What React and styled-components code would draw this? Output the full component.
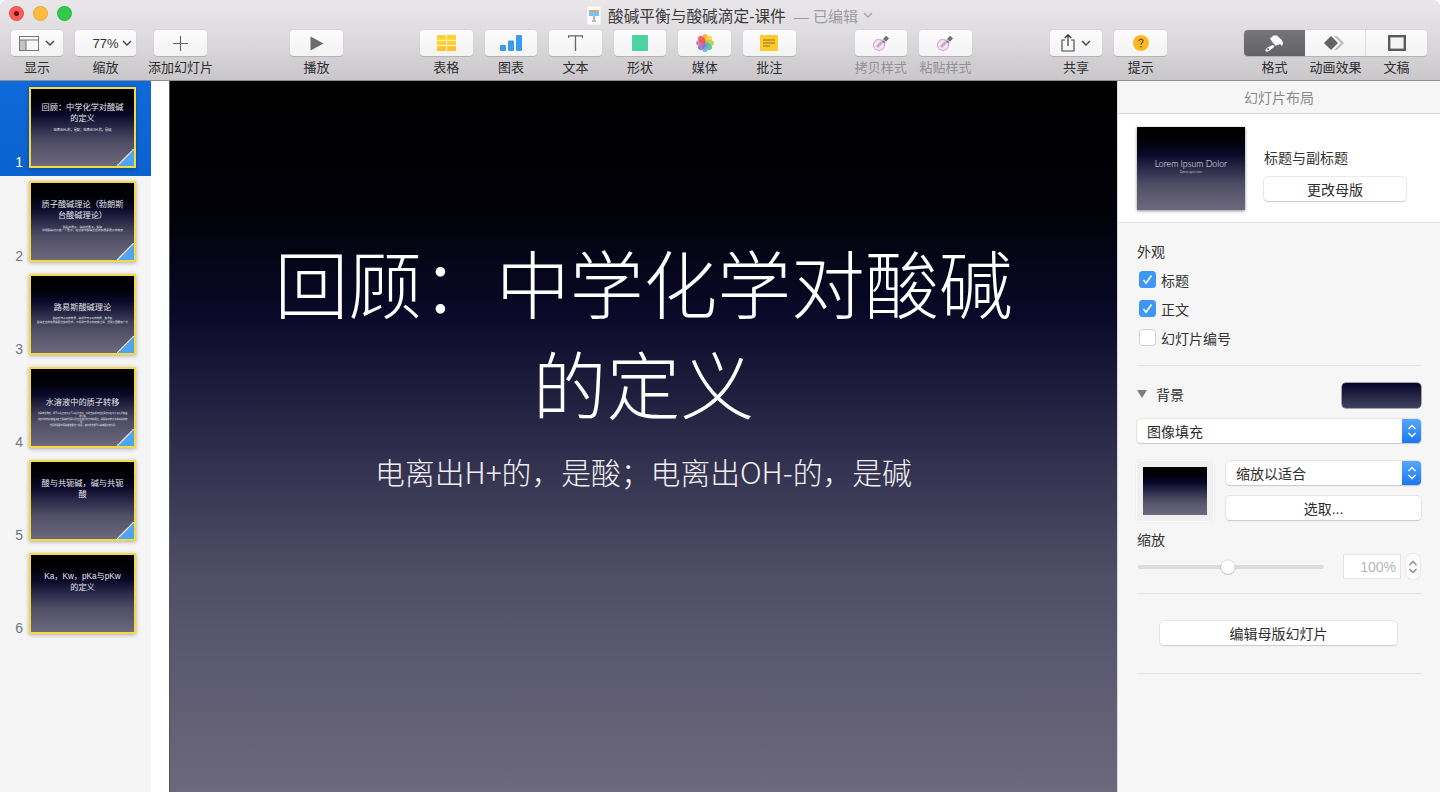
import React from "react";
import styled, { createGlobalStyle, css } from "styled-components";

const FONT = `"Liberation Sans", "Noto Sans CJK SC", sans-serif`;
const SLIDE_FONT = `"Noto Sans CJK SC", sans-serif`;
const SLIDE_BG = `linear-gradient(180deg, #000 0%, #010108 18%, #0a0929 33%, #2b2a49 50%, #514f67 70%, #6c697d 100%)`;

const GlobalStyle = createGlobalStyle`
  html, body { margin: 0; padding: 0; background: #fff; }
  body { font-family: ${FONT}; color: #333; }
  * { box-sizing: border-box; }
`;

const Window = styled.div`
  width: 1440px;
  height: 792px;
  overflow: hidden;
  border-radius: 6px 6px 0 0;
  display: flex;
  flex-direction: column;
`;

const Toolbar = styled.header`
  height: 81px;
  flex: none;
  background: linear-gradient(180deg, #e9e7ea 0%, #dddbde 45%, #c9c7ca 100%);
  border-bottom: 1px solid #8f8e90;
  display: flex;
  flex-direction: column;
`;

const TitleRow = styled.div`
  height: 30px;
  flex: none;
  position: relative;
  display: flex;
  align-items: center;
  padding-left: 587px;
`;

const Lights = styled.div`
  position: absolute;
  left: 9px;
  top: 6px;
  display: flex;
  gap: 9px;
`;

const Light = styled.span`
  width: 15px;
  height: 15px;
  border-radius: 50%;
  background: ${(p) => p.$color};
  border: 1px solid rgba(0, 0, 0, 0.08);
  display: flex;
  align-items: center;
  justify-content: center;
  &::after {
    content: "";
    display: ${(p) => (p.$dot ? "block" : "none")};
    width: 5px;
    height: 5px;
    border-radius: 50%;
    background: #6a0d0b;
  }
`;

const DocName = styled.span`
  margin-left: 7px;
  font-size: 15.7px;
  color: #3a3a3a;
  white-space: nowrap;
`;

const DocState = styled.span`
  margin-left: 8px;
  font-size: 15px;
  color: #9b9a9c;
  white-space: nowrap;
`;

const DocChevron = styled.span`
  margin-left: 5px;
  display: flex;
`;

const Tools = styled.div`
  display: flex;
  padding-left: 11px;
`;

const Group = styled.div`
  display: flex;
  gap: 12px;
  margin-left: ${(p) => p.$left || 0}px;
`;

const Tool = styled.div`
  width: ${(p) => p.$w || 52.6}px;
  margin-left: ${(p) => p.$left || 0}px;
  display: flex;
  flex-direction: column;
  align-items: center;
`;

const ToolButton = styled.div`
  width: 100%;
  height: 26px;
  border-radius: 4px;
  background: linear-gradient(180deg, #fcfcfc, #f3f3f3);
  box-shadow: 0 1px 0 #b3b2b4, 0 0 0 0.5px #d0cfd1;
  display: flex;
  align-items: center;
  justify-content: center;
  gap: 6px;
`;

const ZoomValue = styled.span`
  font-size: 13px;
  margin-left: 13px;
  margin-right: -3px;
  color: #333;
`;

const ToolLabel = styled.span`
  margin-top: 2.5px;
  font-size: 13px;
  line-height: 18px;
  white-space: nowrap;
  color: ${(p) => (p.$off ? "#929193" : "#2e2e2e")};
`;

const Segments = styled.div`
  width: 183px;
  display: flex;
  flex-direction: column;
`;

const SegmentBar = styled.div`
  height: 26px;
  display: flex;
  border-radius: 4px;
  overflow: hidden;
  background: linear-gradient(180deg, #fcfcfc, #f3f3f3);
  box-shadow: 0 1px 0 #b3b2b4, 0 0 0 0.5px #d0cfd1;
`;

const Segment = styled.div`
  flex: 1;
  display: flex;
  align-items: center;
  justify-content: center;
  border-left: ${(p) => (p.$divided ? "1px solid #dcdcdc" : "none")};
  ${(p) =>
    p.$active &&
    css`
      background: linear-gradient(180deg, #757476, #636264);
    `}
`;

const SegmentLabels = styled.div`
  display: flex;
  margin-top: 2.5px;
`;

const SegmentLabel = styled.span`
  flex: 1;
  text-align: center;
  font-size: 13px;
  line-height: 18px;
  white-space: nowrap;
  color: #2e2e2e;
`;

const Body = styled.div`
  flex: 1;
  min-height: 0;
  display: flex;
`;

const Sidebar = styled.aside`
  width: 151px;
  flex: none;
  background: #f5f5f5;
`;

const SlideRow = styled.div`
  height: ${(p) => (p.$selected ? 95 : 93)}px;
  padding-top: ${(p) => (p.$selected ? 6 : 5)}px;
  background: ${(p) => (p.$selected ? "linear-gradient(180deg, #0e6ad8, #0a62cf)" : "transparent")};
  display: flex;
  align-items: flex-start;
`;

const SlideNumber = styled.span`
  width: 23px;
  height: 83px;
  display: flex;
  align-items: flex-end;
  justify-content: flex-end;
  margin-right: 6px;
  font-size: 14px;
  line-height: 16px;
  color: ${(p) => (p.$selected ? "#fff" : "#6f7782")};
`;

const Thumb = styled.div`
  position: relative;
  width: 107px;
  height: 81px;
  border: 2px solid #f6d942;
  background: ${SLIDE_BG};
  box-shadow: 0 1px 4px rgba(0, 0, 0, 0.3);
  text-align: center;
  overflow: hidden;
  color: #e4e4e8;
  font-weight: 400;
  padding-top: ${(p) => p.$top}px;
`;

const ThumbTitle = styled.div`
  font-size: 8.2px;
  line-height: 11.4px;
  padding: 0 8px;
  white-space: pre-line;
`;

const ThumbSub = styled.div`
  font-size: ${(p) => p.$size || 3.2}px;
  line-height: ${(p) => (p.$size ? p.$size + 0.6 : 3.8)}px;
  margin-top: 4px;
  padding: 0 6px;
  white-space: pre-line;
`;

const BuildCorner = styled.svg`
  position: absolute;
  right: 0;
  bottom: 0;
`;

const Gutter = styled.div`
  width: 18px;
  flex: none;
  background: #fff;
`;

const Canvas = styled.main`
  width: 948px;
  flex: none;
  background: ${SLIDE_BG};
  color: #fff;
  text-align: center;
  padding-top: 149px;
  border-left: 1px solid #555;
  font-family: ${SLIDE_FONT};
`;

const SlideTitle = styled.h1`
  margin: 0 auto;
  width: 760px;
  font-size: 73.8px;
  line-height: 101px;
  font-weight: 300;
`;

const SlideSubtitle = styled.p`
  margin: 20px 0 0;
  font-size: 29.8px;
  line-height: 38px;
  font-weight: 300;
  color: #f0f0f4;
`;

const Inspector = styled.aside`
  flex: 1;
  background: #f6f6f6;
  border-left: 1px solid #d8d8d8;
  font-size: 14px;
  color: #333;
`;

const InspectorHead = styled.div`
  height: 33px;
  display: flex;
  align-items: center;
  justify-content: center;
  font-size: 14px;
  color: #8a8a8a;
  border-bottom: 1px solid #d4d6d9;
`;

const LayoutCard = styled.section`
  height: 109px;
  background: #fff;
  border-bottom: 1px solid #e2e2e2;
  padding: 13px 0 0 19px;
  display: flex;
  gap: 19px;
`;

const MasterPreview = styled.div`
  width: 108px;
  height: 83px;
  flex: none;
  background: ${SLIDE_BG};
  box-shadow: 0 1px 3px rgba(0, 0, 0, 0.45);
  color: #f0f0f2;
  text-align: center;
  padding-top: 31px;
  font-family: Lato, sans-serif;
  font-weight: 300;
  font-size: 8.8px;
  line-height: 12px;
`;

const MasterSub = styled.div`
  font-size: 3px;
  line-height: 5px;
`;

const MasterInfo = styled.div`
  padding-top: 21px;
  width: 142px;
`;

const MasterName = styled.div`
  font-size: 14px;
  line-height: 20px;
  white-space: nowrap;
`;

const PlainButton = styled.div`
  height: 24px;
  width: ${(p) => p.$w || "100%"};
  margin: ${(p) => p.$margin || 0};
  background: #fff;
  border-radius: 4px;
  box-shadow: 0 0 0 0.5px #d5d5d5, 0 1px 1px #c4c4c4;
  display: flex;
  align-items: center;
  justify-content: center;
  font-size: 14px;
  color: #2c2c2c;
`;

const Section = styled.section`
  margin: 0 19px 0 19px;
  padding: ${(p) => p.$pad};
  height: ${(p) => p.$h}px;
  border-bottom: 1px solid #e3e3e3;
`;

const SectionLabel = styled.div`
  font-size: 14px;
  line-height: 20px;
  margin-top: ${(p) => p.$top || 0}px;
  margin-bottom: ${(p) => p.$bottom || 0}px;
`;

const CheckRow = styled.div`
  height: 29px;
  padding-left: 2px;
  display: flex;
  align-items: center;
  gap: 5px;
  font-size: 14px;
`;

const CheckBox = styled.span`
  width: 17px;
  height: 17px;
  border-radius: 3.5px;
  background: ${(p) => (p.$on ? "#3f97f5" : "#fff")};
  border: ${(p) => (p.$on ? "none" : "1px solid #cfcfcf")};
  display: flex;
  align-items: center;
  justify-content: center;
`;

const BgHead = styled.div`
  display: flex;
  align-items: center;
  height: 25px;
`;

const BgLabel = styled.span`
  padding-bottom: 3px;
`;

const Triangle = styled.span`
  width: 0;
  height: 0;
  border-left: 5px solid transparent;
  border-right: 5px solid transparent;
  border-top: 8px solid #7d7d7d;
  margin: 0 9px 3px 0;
`;

const Swatch = styled.div`
  margin-left: auto;
  width: 79px;
  height: 25px;
  border-radius: 4px;
  background: linear-gradient(180deg, #06052a, #42415d);
  box-shadow: 0 0 0 0.5px #555;
`;

const Select = styled.div`
  height: 24px;
  margin-top: ${(p) => p.$top || 0}px;
  background: #fff;
  border-radius: 4px;
  box-shadow: 0 0 0 0.5px #d0d0d0, 0 1px 1px #c4c4c4;
  display: flex;
  align-items: center;
  padding-left: 10px;
  font-size: 14px;
  color: #2c2c2c;
  overflow: hidden;
`;

const SelectArrows = styled.span`
  margin-left: auto;
  width: 19px;
  height: 100%;
  background: linear-gradient(180deg, #58a6fb, #1a79f0);
  display: flex;
  align-items: center;
  justify-content: center;
`;

const ImageRow = styled.div`
  display: flex;
  gap: 12px;
  margin-top: 18px;
`;

const ImageWell = styled.div`
  width: 78px;
  height: 62px;
  flex: none;
  margin: -1px 0 0 -1px;
  background: #f0f0f0;
  border: 1px solid #fbfbfb;
  border-radius: 4px;
  box-shadow: 0 0 0 0.5px #eaeaea;
  padding: 6px;
`;

const WellImage = styled.div`
  width: 100%;
  height: 100%;
  background: ${SLIDE_BG};
`;

const ImageControls = styled.div`
  flex: 1;
  display: flex;
  flex-direction: column;
  gap: 11px;
`;

const ScaleRow = styled.div`
  display: flex;
  align-items: center;
  margin-top: 4px;
`;

const SliderTrack = styled.div`
  position: relative;
  width: 186px;
  height: 4px;
  margin-left: 1px;
  border-radius: 2px;
  background: #dcdcdc;
`;

const SliderThumb = styled.span`
  position: absolute;
  left: 83px;
  top: -5px;
  width: 14px;
  height: 14px;
  border-radius: 50%;
  background: #fff;
  box-shadow: 0 0 1px rgba(0, 0, 0, 0.45), 0 1px 1px rgba(0, 0, 0, 0.15);
`;

const ScaleInput = styled.div`
  width: 58px;
  height: 25px;
  margin-left: 19px;
  background: #fff;
  border: 1px solid #e3e3e3;
  display: flex;
  align-items: center;
  justify-content: flex-end;
  padding-right: 4px;
  font-size: 14px;
  color: #b5b5b5;
`;

const Stepper = styled.div`
  width: 14px;
  height: 25px;
  margin-left: 5px;
  background: #fbfbfb;
  border-radius: 5px;
  box-shadow: 0 0 0 0.5px #dcdcdc;
  display: flex;
  align-items: center;
  justify-content: center;
`;

const Chevron = ({ c = "#444", w = 10 }) => (
  <svg width={w} height="6" viewBox="0 0 10 6" fill="none">
    <path d="M1 1l4 4 4-4" stroke={c} strokeWidth="1.4" />
  </svg>
);

const UpDown = ({ c = "#fff" }) => (
  <svg width="10" height="16" viewBox="0 0 10 16" fill="none">
    <path d="M1.500 6L5 2.500 8.500 6M1.500 10L5 13.500 8.500 10" stroke={c} strokeWidth="1.400" />
  </svg>
);

const Tick = () => (
  <svg width="11" height="11" viewBox="0 0 11 11" fill="none">
    <path d="M1.500 6l2.500 3.200L9.500 1.500" stroke="#fff" strokeWidth="1.600" />
  </svg>
);

const DocIcon = () => (
  <svg width="14" height="19" viewBox="0 0 14 19">
    <rect width="14" height="19" fill="#fafafa" stroke="#d5d5d5" strokeWidth="0.5" />
    <rect x="2" y="4" width="10" height="6" fill="#7cc4ee" />
    <rect x="2" y="4" width="10" height="1.500" fill="#e8a15b" />
    <path d="M7 10v4M5 15h4" stroke="#777" strokeWidth="1" />
  </svg>
);

const ViewIcon = () => (
  <svg width="20" height="15" viewBox="0 0 20 15" fill="none">
    <rect x="0.500" y="0.500" width="19" height="14" fill="#f7f7f7" stroke="#777" />
    <rect x="1" y="4" width="6" height="10" fill="#c4c4c4" />
    <path d="M7 4v10M1 4h18" stroke="#777" />
  </svg>
);

const PlusIcon = () => (
  <svg width="15" height="15" viewBox="0 0 15 15">
    <path d="M7.500 0v15M0 7.500h15" stroke="#666" strokeWidth="1.200" />
  </svg>
);

const PlayIcon = () => (
  <svg width="14" height="15" viewBox="0 0 14 15">
    <path d="M0.500 0.500L13.500 7.500 0.500 14.500z" fill="#6b6b6b" />
  </svg>
);

const TableIcon = () => (
  <svg width="19" height="16" viewBox="0 0 19 16">
    <rect width="19" height="16" rx="1" fill="#fed12f" />
    <rect y="10" width="19" height="6" fill="#fcc232" />
    <path d="M9.500 0v16M0 5.300h19M0 10.600h19" stroke="#fff6cf" strokeWidth="1" />
  </svg>
);

const ChartIcon = () => (
  <svg width="22" height="16" viewBox="0 0 22 16">
    <rect x="0" y="10" width="6" height="6" rx="1" fill="#3a9bf0" />
    <rect x="8" y="5.500" width="6" height="10.500" rx="1" fill="#3a9bf0" />
    <rect x="16" y="0" width="6" height="16" rx="1" fill="#3a9bf0" />
  </svg>
);

const TextIcon = () => (
  <svg width="15" height="16" viewBox="0 0 15 16" fill="none">
    <path d="M0.500 3V0.800h14V3M7.500 0.800V16" stroke="#666" strokeWidth="1.300" />
  </svg>
);

const ShapeIcon = () => (
  <svg width="16" height="16" viewBox="0 0 16 16">
    <rect width="16" height="16" rx="1" fill="#4dd3a1" />
  </svg>
);

const PETALS = ["#f5a623", "#f7d13a", "#a5d24a", "#52c18b", "#5aa9e6", "#8a6fd1", "#d56bb5", "#ef5350"];
const PhotosIcon = () => (
  <svg width="18" height="18" viewBox="0 0 18 18">
    {PETALS.map((c, i) => (
      <ellipse key={c} cx="9" cy="4.500" rx="2.900" ry="4.500" fill={c} opacity="0.88" transform={`rotate(${i * 45} 9 9)`} />
    ))}
  </svg>
);

const NoteIcon = () => (
  <svg width="18" height="16" viewBox="0 0 18 16">
    <rect width="18" height="16" rx="1" fill="#fdcb2e" />
    <path d="M3 5h12M3 8h12M3 11h7" stroke="#8d6f16" strokeWidth="1" />
  </svg>
);

const DropperIcon = () => (
  <svg width="20" height="18" viewBox="0 0 20 18" fill="none">
    <circle cx="8" cy="11" r="5.500" fill="#f7e6f7" stroke="#eba4ea" strokeWidth="1.300" />
    <path d="M6 13l6.500-6.500" stroke="#b9b9bb" strokeWidth="3" />
    <path d="M12 7l2 2" stroke="#777" strokeWidth="1.500" />
    <path d="M13.500 6.500l3-3.500" stroke="#6f6f6f" strokeWidth="4" />
  </svg>
);

const ShareIcon = () => (
  <svg width="14" height="18" viewBox="0 0 14 18" fill="none">
    <path d="M4 6H1v11h12V6h-3" stroke="#444" strokeWidth="1.100" />
    <path d="M7 12V1M3.800 4L7 0.800 10.200 4" stroke="#222" strokeWidth="1.100" />
  </svg>
);

const TipIcon = () => (
  <svg width="16" height="16" viewBox="0 0 16 16">
    <circle cx="8" cy="8" r="8" fill="#fbb823" />
    <path d="M6 6.200c0-2.600 4-2.600 4-0.200 0 1.600-2 1.600-2 3.500" fill="none" stroke="#5a4208" strokeWidth="1.200" />
    <circle cx="8" cy="11.800" r="0.800" fill="#5a4208" />
  </svg>
);

const BrushIcon = () => (
  <svg width="18" height="17" viewBox="0 0 18 17">
    <path d="M5 3.500L8.500 0.500l3.500 0 2 2 3 2.500 1 3.500-1 2.500-2-2-1.500 1-1-0.500-1.500 1.500-3-3z" fill="#fff" />
    <path d="M7.800 9.800l1.800 1.800-4.800 3.800c-1.200 1-3.200 1.500-4.200 0.800-0.500-1 0.500-2.400 1.500-3.400z" fill="#fff" />
    <circle cx="3" cy="14" r="1" fill="#6a696b" />
  </svg>
);

const AnimIcon = () => (
  <svg width="21" height="14" viewBox="0 0 21 14">
    <path d="M13 0l7 7-7 7h-3l7-7-7-7z" fill="#bcbcbc" />
    <path d="M7 0l7 7-7 7-7-7z" fill="#636363" />
  </svg>
);

const DocumentIcon = () => (
  <svg width="18" height="16" viewBox="0 0 18 16" fill="none">
    <rect x="1.200" y="1.200" width="15.600" height="13.600" fill="#f5f5f5" stroke="#5a5a5a" strokeWidth="2.400" />
  </svg>
);

const Corner = () => (
  <BuildCorner width="17" height="17" viewBox="0 0 17 17">
    <path d="M17 1v16H1z" fill="#4da6f5" />
    <path d="M0 17L17 0" stroke="#fff" strokeWidth="1.200" />
  </BuildCorner>
);

const slides = [
  { title: "回顾：中学化学对酸碱的定义", top: 13, sub: "电离出H+的，是酸；电离出OH-的，是碱", build: true },
  { title: "质子酸碱理论（勃朗斯台酸碱理论）", top: 16, sub: "酸给出质子，碱接受质子，酸碱\n共轭酸碱对只差一个质子，在溶液中酸碱反应的实质是质子的转移", size: 2.8, build: true },
  { title: "路易斯酸碱理论", top: 26, sub: "酸接受电子对的物质，碱提供电子对的物质，路易斯\n酸碱反应的本质是配位键的形成，不局限于质子的转移过程，适用范围更加广泛", size: 2.6, build: true },
  { title: "水溶液中的质子转移", top: 28, sub: "水是两性物质，既可以给出质子又可以接受质子，水的自身解离反应是质子在水分子之间转移的过程\n溶液中的质子转移决定了酸碱的强弱以及反应进行的方向和限度，是酸碱平衡计算的基础和依据，\n常见的弱酸与弱碱都遵循这个规律，其平衡常数可以由实验测定得到", size: 2.2, build: true },
  { title: "酸与共轭碱，碱与共轭酸", top: 16, build: true },
  { title: "Ka，Kw，pKa与pKw\n的定义", top: 16 },
];

const tools1 = [
  { label: "显示", w: 52, extra: true, icon: <ViewIcon /> },
  { label: "缩放", w: 61, zoom: true },
  { label: "添加幻灯片", w: 53, icon: <PlusIcon />, left: 6 },
];
const tools2 = [
  { label: "表格", icon: <TableIcon /> },
  { label: "图表", icon: <ChartIcon /> },
  { label: "文本", icon: <TextIcon /> },
  { label: "形状", icon: <ShapeIcon /> },
  { label: "媒体", icon: <PhotosIcon /> },
  { label: "批注", icon: <NoteIcon /> },
];

const App = () => {
  return (
    <Window>
      <GlobalStyle />
      <Toolbar>
        <TitleRow>
          <Lights>
            <Light $color="#fc5b57" $dot />
            <Light $color="#fdbc40" />
            <Light $color="#34c84a" />
          </Lights>
          <DocIcon />
          <DocName>酸碱平衡与酸碱滴定-课件</DocName>
          <DocState>— 已编辑</DocState>
          <DocChevron>
            <Chevron c="#a5a4a6" />
          </DocChevron>
        </TitleRow>
        <Tools>
          <Group>
            {tools1.map((t) => (
              <Tool key={t.label} $w={t.w} $left={t.left}>
                <ToolButton>
                  {t.zoom ? (
                    <>
                      <ZoomValue>77%</ZoomValue>
                      <Chevron />
                    </>
                  ) : (
                    t.icon
                  )}
                  {t.extra && <Chevron />}
                </ToolButton>
                <ToolLabel>{t.label}</ToolLabel>
              </Tool>
            ))}
          </Group>
          <Group $left={83}>
            <Tool $w={53}>
              <ToolButton>
                <PlayIcon />
              </ToolButton>
              <ToolLabel>播放</ToolLabel>
            </Tool>
          </Group>
          <Group $left={77}>
            {tools2.map((t) => (
              <Tool key={t.label}>
                <ToolButton>{t.icon}</ToolButton>
                <ToolLabel>{t.label}</ToolLabel>
              </Tool>
            ))}
          </Group>
          <Group $left={59}>
            <Tool>
              <ToolButton>
                <DropperIcon />
              </ToolButton>
              <ToolLabel $off>拷贝样式</ToolLabel>
            </Tool>
            <Tool>
              <ToolButton>
                <DropperIcon />
              </ToolButton>
              <ToolLabel $off>粘贴样式</ToolLabel>
            </Tool>
          </Group>
          <Group $left={78}>
            <Tool>
              <ToolButton>
                <ShareIcon />
                <Chevron />
              </ToolButton>
              <ToolLabel>共享</ToolLabel>
            </Tool>
            <Tool>
              <ToolButton>
                <TipIcon />
              </ToolButton>
              <ToolLabel>提示</ToolLabel>
            </Tool>
          </Group>
          <Group $left={77}>
            <Segments>
              <SegmentBar>
                <Segment $active>
                  <BrushIcon />
                </Segment>
                <Segment>
                  <AnimIcon />
                </Segment>
                <Segment $divided>
                  <DocumentIcon />
                </Segment>
              </SegmentBar>
              <SegmentLabels>
                <SegmentLabel>格式</SegmentLabel>
                <SegmentLabel>动画效果</SegmentLabel>
                <SegmentLabel>文稿</SegmentLabel>
              </SegmentLabels>
            </Segments>
          </Group>
        </Tools>
      </Toolbar>
      <Body>
        <Sidebar>
          {slides.map((s, i) => (
            <SlideRow key={s.title} $selected={i === 0}>
              <SlideNumber $selected={i === 0}>{i + 1}</SlideNumber>
              <Thumb $top={s.top}>
                <ThumbTitle>{s.title}</ThumbTitle>
                {s.sub && <ThumbSub $size={s.size}>{s.sub}</ThumbSub>}
                {s.build && <Corner />}
              </Thumb>
            </SlideRow>
          ))}
        </Sidebar>
        <Gutter />
        <Canvas>
          <SlideTitle>回顾：中学化学对酸碱的定义</SlideTitle>
          <SlideSubtitle>电离出H+的，是酸；电离出OH-的，是碱</SlideSubtitle>
        </Canvas>
        <Inspector>
          <InspectorHead>幻灯片布局</InspectorHead>
          <LayoutCard>
            <MasterPreview>
              Lorem Ipsum Dolor
              <MasterSub>Donec quis nunc</MasterSub>
            </MasterPreview>
            <MasterInfo>
              <MasterName>标题与副标题</MasterName>
              <PlainButton $margin="9px 0 0">更改母版</PlainButton>
            </MasterInfo>
          </LayoutCard>
          <Section $h={143} $pad="19px 0 0">
            <SectionLabel $bottom={3}>外观</SectionLabel>
            <CheckRow>
              <CheckBox $on>
                <Tick />
              </CheckBox>
              标题
            </CheckRow>
            <CheckRow>
              <CheckBox $on>
                <Tick />
              </CheckBox>
              正文
            </CheckRow>
            <CheckRow>
              <CheckBox />
              幻灯片编号
            </CheckRow>
          </Section>
          <Section $h={228} $pad="17px 0 0">
            <BgHead>
              <Triangle />
              <BgLabel>背景</BgLabel>
              <Swatch />
            </BgHead>
            <Select $top={11}>
              图像填充
              <SelectArrows>
                <UpDown />
              </SelectArrows>
            </Select>
            <ImageRow>
              <ImageWell>
                <WellImage />
              </ImageWell>
              <ImageControls>
                <Select>
                  缩放以适合
                  <SelectArrows>
                    <UpDown />
                  </SelectArrows>
                </Select>
                <PlainButton>选取...</PlainButton>
              </ImageControls>
            </ImageRow>
            <SectionLabel $top={8}>缩放</SectionLabel>
            <ScaleRow>
              <SliderTrack>
                <SliderThumb />
              </SliderTrack>
              <ScaleInput>100%</ScaleInput>
              <Stepper>
                <UpDown c="#8a8a8a" />
              </Stepper>
            </ScaleRow>
          </Section>
          <Section $h={80} $pad="27px 0 0">
            <PlainButton $w="237px" $margin="0 0 0 23px">
              编辑母版幻灯片
            </PlainButton>
          </Section>
        </Inspector>
      </Body>
    </Window>
  );
};

export default App;
